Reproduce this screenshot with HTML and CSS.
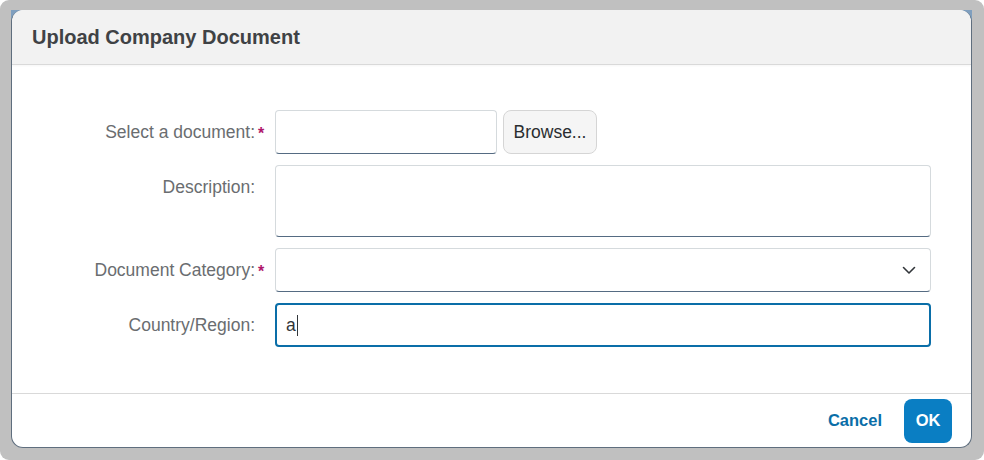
FILE: index.html
```html
<!DOCTYPE html>
<html lang="en">
<head>
<meta charset="utf-8">
<title>Upload Company Document</title>
<link rel="stylesheet" href="styles.css">
</head>
<body>
<div class="frame">
  <div class="dialog">
    <header class="dialog-header">
      <h1 class="dialog-title">Upload Company Document</h1>
    </header>
    <main class="dialog-content">
      <form class="form">
        <label class="form-label">Select a document:<span class="req">*</span></label>
        <div class="file-row">
          <div class="field file-field"></div>
          <button type="button" class="browse-btn">Browse...</button>
        </div>

        <label class="form-label">Description:</label>
        <div class="field textarea-field"></div>

        <label class="form-label">Document Category:<span class="req">*</span></label>
        <div class="field select-field">
          <svg class="chevron" width="16" height="16" viewBox="0 0 16 16" aria-hidden="true">
            <path d="M2.5 5.5 L8 11 L13.5 5.5" fill="none" stroke="#32363a" stroke-width="1.6" stroke-linecap="round" stroke-linejoin="round"/>
          </svg>
        </div>

        <label class="form-label">Country/Region:</label>
        <div class="field focus-field"><span class="value">a</span><span class="caret"></span></div>
      </form>
    </main>
    <footer class="dialog-footer">
      <button type="button" class="btn-cancel">Cancel</button>
      <button type="button" class="btn-ok">OK</button>
    </footer>
  </div>
</div>
</body>
</html>
```

FILE: styles.css
```css
* { box-sizing: border-box; }

html, body {
  margin: 0;
  padding: 0;
  background: #ffffff;
}

body {
  font-family: "Liberation Sans", Arial, sans-serif;
  width: 984px;
  height: 460px;
  overflow: hidden;
}

.frame {
  position: relative;
  width: 984px;
  height: 460px;
  background: #c0c0c0;
  border-radius: 9px;
  padding: 10px 12px 12px 11px;
}

.frame::before {
  content: "";
  position: absolute;
  left: 11px;
  top: 10px;
  width: 961px;
  height: 14px;
  background: #7f9fbf;
}

.dialog {
  position: relative;
  width: 961px;
  height: 438px;
  background: #ffffff;
  border-radius: 12px;
  overflow: hidden;
  display: flex;
  flex-direction: column;
  border: 1px solid #5f6e7e;
  border-top: none;
}

.dialog-header {
  height: 55px;
  background: #f2f2f2;
  border-bottom: 1px solid #d9d9d9;
  box-shadow: 0 1px 2px rgba(0, 0, 0, 0.04);
  display: flex;
  align-items: center;
  padding-left: 20px;
  flex-shrink: 0;
}

.dialog-title {
  margin: 0;
  font-size: 20px;
  font-weight: 700;
  color: #3f4245;
  padding-top: 1px;
}

.dialog-content {
  flex: 1;
  padding: 45px 39px 0 0;
}

.form {
  display: grid;
  grid-template-columns: 243px 656px;
  column-gap: 20px;
  row-gap: 11px;
}

.form-label {
  position: relative;
  text-align: right;
  font-size: 17.5px;
  line-height: 44px;
  color: #6a6d70;
  align-self: start;
  white-space: nowrap;
}

.req {
  position: absolute;
  left: 100%;
  top: 9px;
  margin-left: 3px;
  color: #b0176b;
  font-weight: 700;
  font-size: 16px;
  line-height: 30px;
}

.file-row {
  display: flex;
  gap: 6px;
}

.field {
  position: relative;
  height: 44px;
  background: #ffffff;
  border: 1px solid #d5dadd;
  border-bottom-color: #556b82;
  border-radius: 4px;
}

.file-field {
  width: 222px;
}

.browse-btn {
  width: 94px;
  height: 44px;
  background: #f5f5f5;
  border: 1px solid #d5d5d5;
  border-radius: 8px;
  font-family: "Liberation Sans", Arial, sans-serif;
  font-size: 17.5px;
  color: #2a2d30;
  padding: 0;
}

.textarea-field {
  height: 72px;
}

.select-field {
  display: flex;
  align-items: center;
  justify-content: flex-end;
  padding-right: 13px;
}

.chevron {
  display: block;
}

.focus-field {
  border: 2px solid #0a6ea8;
  border-radius: 4px;
  display: flex;
  align-items: center;
  padding-left: 9px;
}

.value {
  font-size: 17.5px;
  color: #32363a;
}

.caret {
  width: 1px;
  height: 21px;
  background: #32363a;
  margin-left: 1px;
}

.dialog-footer {
  height: 54px;
  border-top: 1px solid #d9d9d9;
  display: flex;
  align-items: center;
  justify-content: flex-end;
  gap: 12px;
  padding-right: 19px;
  flex-shrink: 0;
}

.btn-cancel {
  background: transparent;
  border: none;
  padding: 0 10px;
  height: 44px;
  font-family: "Liberation Sans", Arial, sans-serif;
  font-size: 16.5px;
  font-weight: 700;
  color: #0a6ea8;
}

.btn-ok {
  width: 48px;
  height: 44px;
  background: #0a7ec3;
  border: none;
  border-radius: 8px;
  font-family: "Liberation Sans", Arial, sans-serif;
  font-size: 16.5px;
  font-weight: 700;
  color: #ffffff;
  padding: 0;
}
```
